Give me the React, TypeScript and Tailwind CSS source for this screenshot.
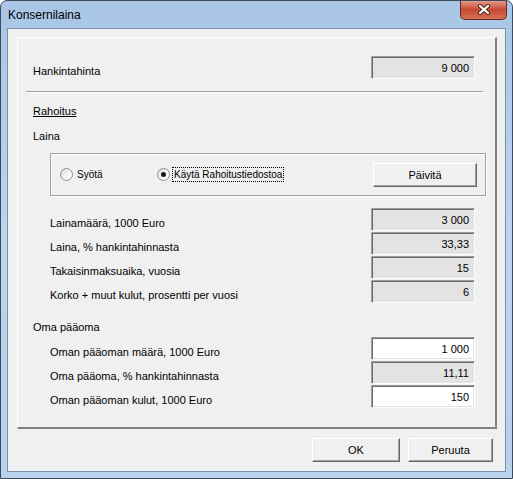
import React from "react";

function Field({ value, editable }: { value: string; editable?: boolean }) {
	return (
		<div
			className={`w-[104px] h-[23px] flex items-center justify-end pr-[5px] border border-t-[#a0a0a0] border-l-[#a0a0a0] border-r-white border-b-white shadow-[inset_1px_1px_0_#696969,inset_-1px_-1px_0_#e3e3e3] ${
				editable ? "bg-white" : "bg-[#e3e3e3]"
			}`}
		>
			{value}
		</div>
	);
}

function Row({
	label,
	value,
	editable,
	indent,
}: {
	label: string;
	value: string;
	editable?: boolean;
	indent?: boolean;
}) {
	return (
		<div className="flex items-center justify-between h-[23px]">
			<span className={indent ? "mt-[6px] pl-[17px]" : "mt-[6px]"}>
				{label}
			</span>
			<Field value={value} editable={editable} />
		</div>
	);
}

function Radio({ checked }: { checked?: boolean }) {
	return (
		<span className="w-[13px] h-[13px] shrink-0 rounded-full border border-[#8e8f8f] bg-gradient-to-br from-[#d6d6d6] via-[#f4f4f4] to-white flex items-center justify-center">
			{checked && (
				<span className="w-[5px] h-[5px] rounded-full bg-[#1a1a1a]" />
			)}
		</span>
	);
}

function Button({ label, width }: { label: string; width: string }) {
	return (
		<div
			className={`${width} h-[24px] flex items-center justify-center border border-t-white border-l-white border-r-[#696969] border-b-[#696969] shadow-[inset_-1px_-1px_0_#a0a0a0] bg-[#f0f0f0]`}
		>
			{label}
		</div>
	);
}

export default function App() {
	return (
		<div className="w-[513px] h-[479px] flex flex-col border border-[#3d4a5a] rounded-t-[7px] bg-gradient-to-b from-[#a9c6e6] via-[#bcd5ef] to-[#b8d1ec] font-['Liberation_Sans',Arial,sans-serif] text-black overflow-hidden">
			{/* title bar */}
			<div className="h-[27px] flex items-start">
				<span className="pl-[7px] pt-[7px] text-[12px] leading-[14px]">
					Konsernilaina
				</span>
				<div className="ml-auto mr-[5px] -mt-px w-[47px] h-[20px] rounded-b-[5px] border border-t-0 border-[#6a2a20] bg-gradient-to-b from-[#e3a393] via-[#c84a33] to-[#d66e55] flex items-center justify-center">
					<svg width="14" height="11" viewBox="0 0 14 11">
						<path
							d="M3 2 L11 9 M11 2 L3 9"
							stroke="#4a241c"
							strokeWidth="4"
							strokeLinecap="round"
						/>
						<path
							d="M3 2 L11 9 M11 2 L3 9"
							stroke="#ffffff"
							strokeWidth="2.2"
							strokeLinecap="round"
						/>
					</svg>
				</div>
			</div>

			{/* client area */}
			<div className="mx-[6px] h-[444px] border border-[#7b8ea5] bg-[#f0f0f0] flex flex-col text-[11px] leading-[14px]">
				<div className="ml-[9px] mr-[8px] mt-[8px] h-[392px] border-t border-l border-white border-r-2 border-b-2 border-r-[#808080] border-b-[#808080] pt-[18px] pl-[15px] pr-[20px] flex flex-col">
					<Row label="Hankintahinta" value="9 000" />

					<div className="-ml-[7px] -mr-[8px] mt-[12px] h-[2px] border-t border-t-[#a0a0a0] border-b border-b-white" />

					<div className="mt-[11px] underline">Rahoitus</div>
					<div className="mt-[11px]">Laina</div>

					<div className="ml-[17px] -mr-[11px] mt-[10px] h-[43px] border border-[#a0a0a0] shadow-[inset_1px_1px_0_#ffffff,1px_1px_0_#ffffff] flex items-center pl-[9px] pr-[8px]">
						<div className="w-[97px] flex items-center gap-[4px] text-[10px]">
							<Radio />
							<span>Syötä</span>
						</div>
						<div className="flex items-center gap-[2px] text-[10px]">
							<Radio checked />
							<span className="border border-dotted border-black px-[1px] leading-[13px]">
								Käytä Rahoitustiedostoa
							</span>
						</div>
						<div className="ml-auto">
							<Button label="Päivitä" width="w-[104px]" />
						</div>
					</div>

					<div className="mt-[12px] flex flex-col gap-[1px]">
						<Row indent label="Lainamäärä, 1000 Euro" value="3 000" />
						<Row indent label="Laina, % hankintahinnasta" value="33,33" />
						<Row indent label="Takaisinmaksuaika, vuosia" value="15" />
						<Row
							indent
							label="Korko + muut kulut, prosentti per vuosi"
							value="6"
						/>
					</div>

					<div className="mt-[17px]">Oma pääoma</div>

					<div className="mt-[3px] flex flex-col gap-[1px]">
						<Row
							indent
							editable
							label="Oman pääoman määrä, 1000 Euro"
							value="1 000"
						/>
						<Row indent label="Oma pääoma, % hankintahinnasta" value="11,11" />
						<Row
							indent
							editable
							label="Oman pääoman kulut, 1000 Euro"
							value="150"
						/>
					</div>
				</div>

				<div className="mt-[9px] pr-[12px] flex justify-end gap-[8px]">
					<Button label="OK" width="w-[88px]" />
					<Button label="Peruuta" width="w-[85px]" />
				</div>
			</div>
		</div>
	);
}
